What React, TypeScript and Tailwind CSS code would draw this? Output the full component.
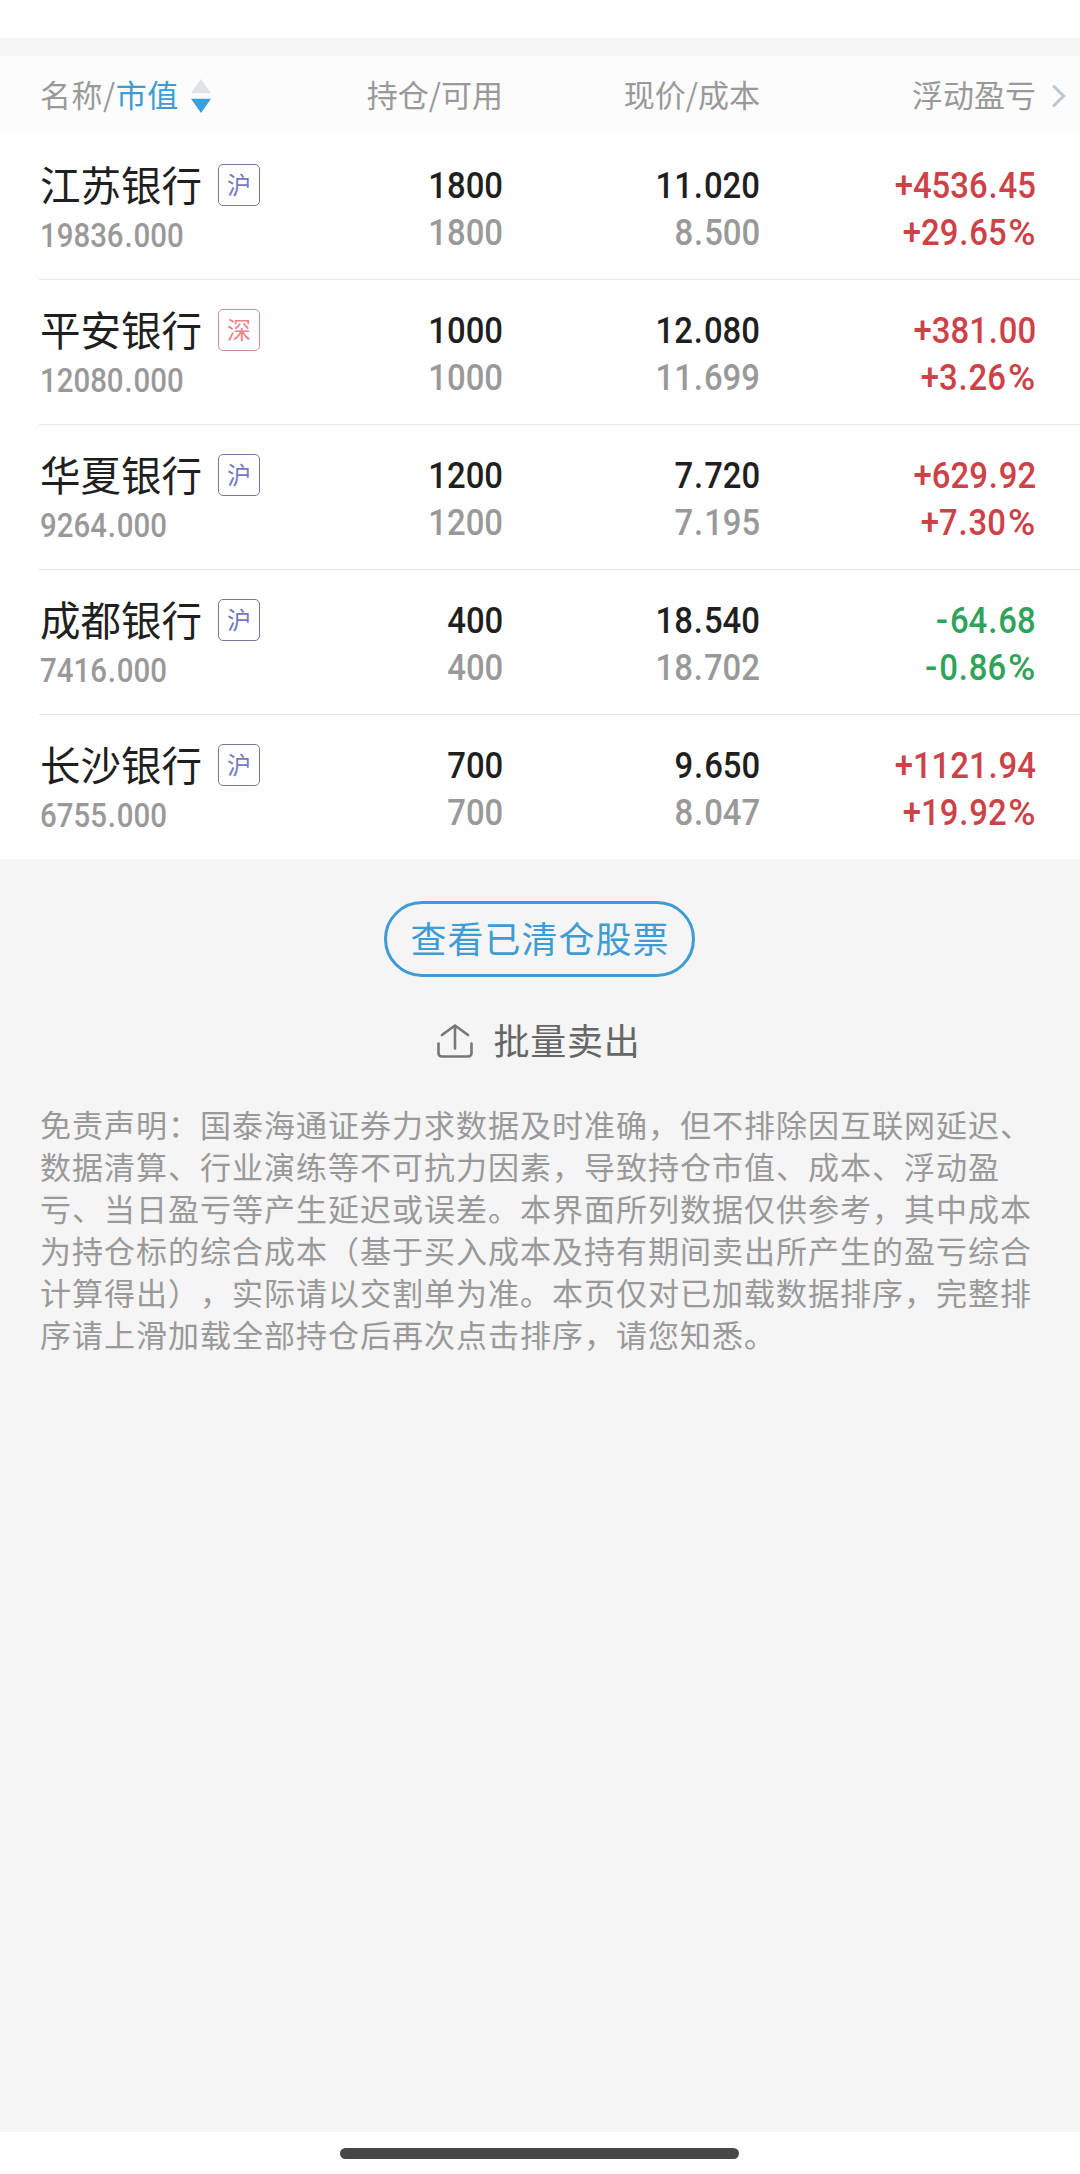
import clsx from 'clsx';

interface Holding {
  name: string;
  market: '沪' | '深';
  marketValue: string;
  position: string;
  available: string;
  price: string;
  cost: string;
  profit: string;
  profitRate: string;
}

const HOLDINGS: Holding[] = [
  {
    name: '江苏银行',
    market: '沪',
    marketValue: '19836.000',
    position: '1800',
    available: '1800',
    price: '11.020',
    cost: '8.500',
    profit: '+4536.45',
    profitRate: '+29.65%',
  },
  {
    name: '平安银行',
    market: '深',
    marketValue: '12080.000',
    position: '1000',
    available: '1000',
    price: '12.080',
    cost: '11.699',
    profit: '+381.00',
    profitRate: '+3.26%',
  },
  {
    name: '华夏银行',
    market: '沪',
    marketValue: '9264.000',
    position: '1200',
    available: '1200',
    price: '7.720',
    cost: '7.195',
    profit: '+629.92',
    profitRate: '+7.30%',
  },
  {
    name: '成都银行',
    market: '沪',
    marketValue: '7416.000',
    position: '400',
    available: '400',
    price: '18.540',
    cost: '18.702',
    profit: '-64.68',
    profitRate: '-0.86%',
  },
  {
    name: '长沙银行',
    market: '沪',
    marketValue: '6755.000',
    position: '700',
    available: '700',
    price: '9.650',
    cost: '8.047',
    profit: '+1121.94',
    profitRate: '+19.92%',
  },
];

const DISCLAIMER =
  '免责声明：国泰海通证券力求数据及时准确，但不排除因互联网延迟、数据清算、行业演练等不可抗力因素，导致持仓市值、成本、浮动盈亏、当日盈亏等产生延迟或误差。本界面所列数据仅供参考，其中成本为持仓标的综合成本（基于买入成本及持有期间卖出所产生的盈亏综合计算得出），实际请以交割单为准。本页仅对已加载数据排序，完整排序请上滑加载全部持仓后再次点击排序，请您知悉。';

// Header and rows share the same four columns.
const COLUMNS = 'grid grid-cols-[263px_200px_257px_276px]';

export default function App() {
  return (
    <div className="flex h-[2174px] w-[1080px] flex-col overflow-hidden bg-[#f5f5f5] font-['Noto_Sans_CJK_SC',sans-serif]">
      <div className="h-[38px] shrink-0 bg-white" />
      <TableHeader />

      <ul className="bg-white">
        {HOLDINGS.map((h) => (
          <HoldingRow key={h.name} holding={h} />
        ))}
      </ul>

      <div className="flex flex-col items-center pt-[42px] pr-[2px]">
        <button
          type="button"
          className="h-[76px] w-[311px] rounded-full border-[3px] border-[#3f9bd4] pb-[5px] pl-[2px] text-[36px] leading-[64px] tracking-[1px] text-[#3f9bd4]"
        >
          查看已清仓股票
        </button>
        <button
          type="button"
          className="mt-[38px] flex h-[52px] items-center gap-[20px] text-[36px] leading-[50px] tracking-[0.8px] text-[#666]"
        >
          <UploadIcon />
          <span className="pb-[5px]">批量卖出</span>
        </button>
      </div>

      <p className="mt-[36px] ml-[40px] w-[996px] text-[31px] leading-[42px] tracking-[1px] text-[#999] [text-spacing-trim:space-all]">
        {DISCLAIMER}
      </p>

      <div className="mt-auto flex h-[42px] shrink-0 justify-center bg-white pt-[16px] pr-[2px]">
        <div className="h-[11px] w-[399px] rounded-full bg-[#474747]" />
      </div>
    </div>
  );
}

function TableHeader() {
  return (
    <div className="mt-[18px] flex h-[79px] shrink-0 items-center bg-[#fcfcfc] pl-[40px] text-[31px] leading-[44px] text-[#999]">
      <div className={COLUMNS}>
        <div className="flex items-center gap-[12px]">
          <span className="pb-[4px] tracking-[0.5px]">
            名称/<span className="text-[#3f9bd4]">市值</span>
          </span>
          <SortIcon />
        </div>
        <span className="pb-[4px] text-right">持仓/可用</span>
        <span className="pb-[4px] text-right">现价/成本</span>
        <span className="pb-[4px] text-right">浮动盈亏</span>
      </div>
      <ChevronIcon />
    </div>
  );
}

function HoldingRow({ holding }: { holding: Holding }) {
  const loss = holding.profit.startsWith('-');
  const profitColor = loss ? 'text-[#2fa35a]' : 'text-[#cc4247]';

  return (
    <li className="ml-[39px] h-[145px] border-b border-[#e6e6e6] pl-px last:h-[144px] last:border-b-0">
      <div className={COLUMNS}>
        <div className="pt-[21px]">
          <div className="flex h-[58px] items-center gap-[16px] whitespace-nowrap">
            <span className="pb-[3px] text-[40.5px] leading-[54px] text-[#1f1f1f]">{holding.name}</span>
            <MarketTag market={holding.market} />
          </div>
          <div className="flex">
            <Amount value={holding.marketValue} small className="text-[#999]" />
          </div>
        </div>
        <Pair top={holding.position} bottom={holding.available} />
        <Pair top={holding.price} bottom={holding.cost} />
        <Pair
          top={holding.profit}
          bottom={holding.profitRate}
          topClass={profitColor}
          bottomClass={profitColor}
        />
      </div>
    </li>
  );
}

interface PairProps {
  top: string;
  bottom: string;
  topClass?: string;
  bottomClass?: string;
}

function Pair({ top, bottom, topClass = 'text-[#1f1f1f]', bottomClass = 'text-[#999]' }: PairProps) {
  return (
    <div className="flex flex-col items-end pt-[27px]">
      <Amount value={top} className={topClass} />
      <Amount value={bottom} className={bottomClass} />
    </div>
  );
}

// Figures are set slightly condensed, with extra air around the decimal point,
// after a minus sign and before a percent sign.
function Amount({ value, small, className }: { value: string; small?: boolean; className?: string }) {
  const minus = value.startsWith('-');
  const percent = value.endsWith('%');
  const [whole, fraction] = value.replace(/^-|%$/g, '').split('.');
  return (
    <span
      className={clsx(
        "inline-block font-['Roboto',sans-serif] font-medium whitespace-nowrap",
        small
          ? 'h-[46px] origin-left scale-x-[0.905] text-[32.5px] leading-[45px]'
          : 'h-[47px] origin-right scale-x-[0.9] text-[36.5px] leading-[47px]',
        className,
      )}
    >
      {minus && <span className="mr-[2px] inline-block origin-right scale-x-110">-</span>}
      {whole}
      {fraction !== undefined && (
        <>
          <span className="mx-px">.</span>
          {fraction}
        </>
      )}
      {percent && <span className="ml-[2px] inline-block w-[31px] origin-left scale-x-[1.13]">%</span>}
    </span>
  );
}

function MarketTag({ market }: { market: Holding['market'] }) {
  return (
    <span
      className={clsx(
        'flex size-[42px] items-center justify-center rounded-[5px] border pb-[2px] text-[24px] leading-none',
        market === '沪' ? 'border-[#7478a8] text-[#7478c0]' : 'border-[#d08f92] text-[#e88488]',
      )}
    >
      {market}
    </span>
  );
}

function SortIcon() {
  return (
    <svg width="20" height="34" viewBox="0 0 20 34" aria-hidden="true">
      <path d="M10 0 L20 14.3 H0 Z" fill="#dfe3e5" />
      <path d="M0 19.7 H20 L10 34 Z" fill="#379fe2" />
    </svg>
  );
}

function ChevronIcon() {
  return (
    <svg className="ml-[16px]" width="14" height="24" viewBox="0 0 14 24" fill="none" aria-hidden="true">
      <path d="M2 2.5 L11.5 12 L2 21.5" stroke="#b9c8d4" strokeWidth="3" strokeLinecap="round" strokeLinejoin="miter" />
    </svg>
  );
}

function UploadIcon() {
  return (
    <svg
      width="36"
      height="34"
      viewBox="0 0 36 34"
      fill="none"
      stroke="#777"
      strokeWidth="2.6"
      strokeLinecap="round"
      strokeLinejoin="round"
      aria-hidden="true"
    >
      <path d="M18 24.5 V1.5 M5 11 L18 1.5 L31 11" />
      <path d="M1.5 19.5 V29 Q1.5 32.5 5 32.5 H31 Q34.5 32.5 34.5 29 V19.5" />
    </svg>
  );
}
